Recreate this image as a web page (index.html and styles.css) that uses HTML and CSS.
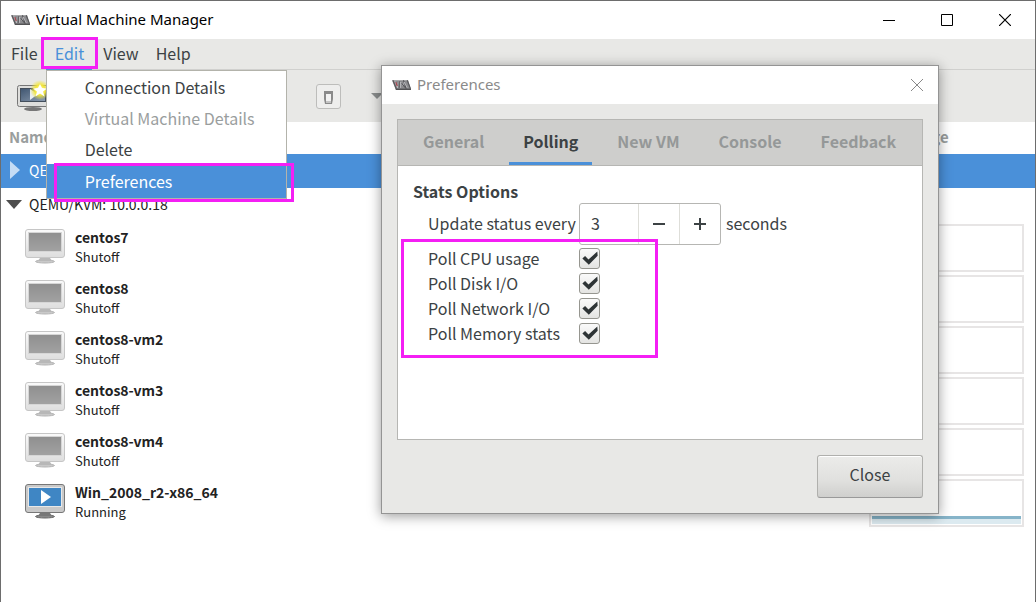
FILE: index.html
```html
<!DOCTYPE html>
<html lang="en">
<head>
<meta charset="utf-8">
<title>Virtual Machine Manager</title>
<link rel="stylesheet" href="styles.css">
</head>
<body>
<svg class="defs" width="0" height="0" aria-hidden="true">
  <defs>
    <linearGradient id="g-case" x1="0" y1="0" x2="0" y2="1"><stop offset="0" stop-color="#fafafa"/><stop offset="1" stop-color="#dedede"/></linearGradient>
    <linearGradient id="g-off" x1="0" y1="0" x2="0" y2="1"><stop offset="0" stop-color="#8f8f8f"/><stop offset="1" stop-color="#a2a2a2"/></linearGradient>
    <linearGradient id="g-dark" x1="0" y1="0" x2="1" y2="1"><stop offset="0" stop-color="#3f5570"/><stop offset="1" stop-color="#8c9cb0"/></linearGradient>
    <radialGradient id="g-glow"><stop offset="0" stop-color="#fffbd0"/><stop offset=".5" stop-color="#f3e63c"/><stop offset="1" stop-color="#f3e63c" stop-opacity="0"/></radialGradient>
    <symbol id="logo" viewBox="0 0 20 12">
      <path d="M0 1h17l3 10H4z" fill="#8b8b8e"/>
      <path d="M1 1l3.500 9M12 1l3 9M16 1l3.500 9" stroke="#58585c" stroke-width="1.200" fill="none"/>
      <path d="M3 2l3 7 1-7M9 9V3l3 4 1-4 3 6" stroke="#c6c6ca" stroke-width=".8" fill="none"/>
      <path d="M7.500 2v7M10 4l4 5" stroke="#4a4a4e" stroke-width="1" fill="none"/>
      <path d="M4 3l1.500 4" stroke="#a8404a" stroke-width="1.200"/>
      <path d="M4 10.500h16" stroke="#4c4c4e" stroke-width="1.400"/>
    </symbol>
    <symbol id="vm-off" viewBox="0 0 40 36">
      <ellipse cx="20" cy="32.500" rx="9.500" ry="1.500" fill="#c9c9c9" stroke="#b4b4b4"/>
      <path d="M15 29h10l2 3H13z" fill="#b8b8b8"/>
      <rect x=".5" y=".5" width="39" height="28" rx="2.500" fill="url(#g-case)" stroke="#c6c6c6"/>
      <rect x="3.500" y="3.500" width="33" height="19" fill="url(#g-off)" stroke="#d6d6d6"/>
    </symbol>
    <symbol id="vm-on" viewBox="0 0 40 36">
      <ellipse cx="20" cy="32.500" rx="9.500" ry="1.500" fill="#888" stroke="#666"/>
      <path d="M15 29h10l2 3H13z" fill="#777"/>
      <rect x=".5" y=".5" width="39" height="28" rx="2.500" fill="#c9c9c9" stroke="#777"/>
      <rect x="3.500" y="3.500" width="33" height="19" fill="#3f86c4" stroke="#e8e8e8"/>
      <path d="M16 6l10 7-10 7z" fill="#fff"/>
    </symbol>
  </defs>
</svg>

<div class="window">
  <header class="titlebar">
    <svg class="logo"><use href="#logo"/></svg>
    <h1 class="title">Virtual Machine Manager</h1>
    <div class="controls">
      <button class="control" aria-label="Minimize"><svg width="12" height="12"><path d="M0 6.500h12" stroke="#000"/></svg></button>
      <button class="control" aria-label="Maximize"><svg width="12" height="12"><path d="M.5.5h11v11H.5z" stroke="#000" fill="none"/></svg></button>
      <button class="control" aria-label="Close window"><svg width="12" height="12"><path d="M0 0l12 12M12 0L0 12" stroke="#000" stroke-width="1.200"/></svg></button>
    </div>
  </header>

  <nav class="menubar">
    <button class="menu">File</button>
    <div class="menu-slot">
      <button class="menu menu-open" aria-expanded="true">Edit</button>
      <span class="mark mark-edit"></span>
      <div class="dropdown" role="menu">
        <button class="item" role="menuitem">Connection Details</button>
        <button class="item" role="menuitem" disabled>Virtual Machine Details</button>
        <button class="item" role="menuitem">Delete</button>
        <button class="item item-active" role="menuitem">Preferences</button>
        <span class="mark mark-preferences"></span>
      </div>
    </div>
    <button class="menu">View</button>
    <button class="menu">Help</button>
  </nav>

  <div class="toolbar">
    <button class="tool tool-new" aria-label="New virtual machine">
      <svg width="36" height="32" viewBox="0 0 36 32">
        <ellipse cx="17" cy="29" rx="9" ry="2" fill="#777"/>
        <rect x="1.500" y="5.500" width="31" height="21" rx="2" fill="#dededc" stroke="#777"/>
        <rect x="4.500" y="8.500" width="25" height="13" fill="url(#g-dark)" stroke="#444f5c"/>
        <path d="M14 9l8 5-8 6z" fill="#e8edf2"/>
        <circle cx="24" cy="10" r="10" fill="url(#g-glow)"/>
        <path d="M24 4l2 4 5 .5-4 3 1.500 5-4.500-3-4.500 3 1.500-5-4-3 5-.5z" fill="#fff"/>
      </svg>
    </button>
    <button class="tool tool-power" aria-label="Shut down">
      <svg width="25" height="25" viewBox="0 0 25 25">
        <rect x=".5" y=".5" width="24" height="24" rx="2.500" fill="#eeeeed" stroke="#bdbdbb"/>
        <path d="M8 7h9v8l-1 5H9l-1-5z" fill="#8a8a8a"/>
        <path d="M10 10h5v7h-5z" fill="#f2f2f2"/>
        <path d="M10 17h5v2h-5z" fill="#c4c4c4"/>
      </svg>
    </button>
    <button class="tool" aria-label="Shut down options"><svg width="12" height="7"><path d="M0 0h12L6 6z" fill="#8a8d8d"/></svg></button>
  </div>

  <table class="machines">
    <thead><tr><th>Name</th><th class="usage">CPU usage</th></tr></thead>
    <tbody>
      <tr class="host host-selected"><td colspan="2"><div class="host-name"><svg class="arrow" viewBox="0 0 16 18"><path d="M4 0l10 9-10 9z" fill="#c5dcf5"/></svg>QEMU/KVM</div></td></tr>
      <tr class="host"><td colspan="2"><div class="host-name"><svg class="arrow" viewBox="0 0 16 18"><path d="M0 5h16l-8 9z" fill="#4d4d4d"/></svg>QEMU/KVM: 10.0.0.18</div></td></tr>
      <tr class="vm"><td><div class="vm-cell"><svg class="vm-icon"><use href="#vm-off"/></svg><div><b>centos7</b><p>Shutoff</p></div></div></td><td><div class="chart"></div></td></tr>
      <tr class="vm"><td><div class="vm-cell"><svg class="vm-icon"><use href="#vm-off"/></svg><div><b>centos8</b><p>Shutoff</p></div></div></td><td><div class="chart"></div></td></tr>
      <tr class="vm"><td><div class="vm-cell"><svg class="vm-icon"><use href="#vm-off"/></svg><div><b>centos8-vm2</b><p>Shutoff</p></div></div></td><td><div class="chart"></div></td></tr>
      <tr class="vm"><td><div class="vm-cell"><svg class="vm-icon"><use href="#vm-off"/></svg><div><b>centos8-vm3</b><p>Shutoff</p></div></div></td><td><div class="chart"></div></td></tr>
      <tr class="vm"><td><div class="vm-cell"><svg class="vm-icon"><use href="#vm-off"/></svg><div><b>centos8-vm4</b><p>Shutoff</p></div></div></td><td><div class="chart"></div></td></tr>
      <tr class="vm"><td><div class="vm-cell"><svg class="vm-icon"><use href="#vm-on"/></svg><div><b>Win_2008_r2-x86_64</b><p>Running</p></div></div></td><td><div class="chart chart-live"></div></td></tr>
    </tbody>
  </table>

  <section class="dialog" role="dialog" aria-labelledby="dialog-title">
    <header class="dialog-bar">
      <svg class="logo"><use href="#logo"/></svg>
      <h2 class="title" id="dialog-title">Preferences</h2>
      <button class="control" aria-label="Close preferences"><svg width="12" height="12"><path d="M0 0l12 12M12 0L0 12" stroke="#888"/></svg></button>
    </header>
    <div class="dialog-body">
      <div class="notebook">
        <div class="tabs" role="tablist">
          <button class="tab" role="tab">General</button>
          <button class="tab tab-active" role="tab" aria-selected="true">Polling</button>
          <button class="tab" role="tab">New VM</button>
          <button class="tab" role="tab">Console</button>
          <button class="tab" role="tab">Feedback</button>
        </div>
        <div class="page">
          <h3 class="group">Stats Options</h3>
          <div class="interval">
            <label class="option-label" for="interval">Update status every</label>
            <div class="spin">
              <input id="interval" type="text" value="3">
              <button aria-label="Decrease"><svg width="14" height="14"><path d="M1 7h12" stroke="#3c4244" stroke-width="2"/></svg></button>
              <button aria-label="Increase"><svg width="14" height="14"><path d="M1 7h12M7 1v12" stroke="#3c4244" stroke-width="2"/></svg></button>
            </div>
            <span class="unit">seconds</span>
          </div>
          <div class="polls">
            <div class="poll"><label class="option-label" for="cpu">Poll CPU usage</label><input id="cpu" type="checkbox" checked></div>
            <div class="poll"><label class="option-label" for="disk">Poll Disk I/O</label><input id="disk" type="checkbox" checked></div>
            <div class="poll"><label class="option-label" for="net">Poll Network I/O</label><input id="net" type="checkbox" checked></div>
            <div class="poll"><label class="option-label" for="mem">Poll Memory stats</label><input id="mem" type="checkbox" checked></div>
            <span class="mark mark-polls"></span>
          </div>
        </div>
      </div>
      <button class="close">Close</button>
    </div>
  </section>
</div>
</body>
</html>
```

FILE: styles.css
```css
* { box-sizing: border-box; }
body { margin: 0; font: 16px/20px "Noto Sans CJK SC", "Noto Sans", sans-serif; color: #3c4244; background: #fff; }
button, input { font: inherit; color: inherit; margin: 0; padding: 0; border: 0; background: none; }
svg { display: block; }
h1, h2, h3, p { margin: 0; }
.defs { position: absolute; }

.window { position: relative; min-height: 100vh; border: 1px solid #6d6d6d; border-bottom: 0; overflow: hidden; }
.titlebar { display: flex; align-items: center; height: 38px; padding-left: 10px; }
.logo { width: 19px; height: 12px; flex: none; }
.title { flex: 1; padding: 0 0 2px 6px; font: 15px/20px "Noto Sans", sans-serif; color: #000; }
.controls { display: flex; padding-right: 1px; }
.control { display: grid; place-items: center; width: 58px; height: 38px; }

.menubar { display: flex; height: 31px; padding-left: 1px; background: #e8e8e6; border-bottom: 1px solid #d0d0ce; }
.menu { height: 30px; padding: 0 8px 2px 9px; }
.menu-slot { position: relative; }
.menu-slot + .menu { margin-left: 2px; }
.menu-open { height: 31px; padding-bottom: 1px; color: #4a90d9; border-bottom: 2px solid #4a90d9; }
.mark { position: absolute; border: 3px solid #f41ff4; pointer-events: none; }
.mark-edit { top: -2px; left: -5px; width: 57px; height: 32px; }
.dropdown { position: absolute; z-index: 1; top: 31px; left: 0; width: 241px; border: 1px solid #b3b3ab; background: #fff; }
.item { display: block; width: 100%; height: 31px; padding: 0 38px; text-align: left; white-space: nowrap; }
.item:disabled { color: #9a9e9e; }
.item-active { height: 34px; color: #fff; background: #4a90d9; }
.mark-preferences { inset: auto -8px -4px 7px; height: 39px; }

.toolbar { display: flex; align-items: center; height: 52px; padding-left: 15px; background: #e8e8e6; }
.tool-power { margin: 0 30px 0 264px; }

.machines { width: 100%; border-collapse: collapse; table-layout: fixed; font-size: 14px; line-height: 19px; color: #222; }
.machines td, .machines th { padding: 0; }
.machines th { height: 32px; padding: 0 0 4px 8px; font-size: 15px; text-align: left; color: #9a9e9e; }
.machines .usage { width: 166px; padding-left: 2px; }
.host { height: 34px; }
.host-name { display: flex; align-items: center; gap: 7px; padding: 0 0 2px 5px; }
.host-selected { color: #fff; background: #4a90d9; }
.arrow { width: 16px; height: 18px; }
.vm { height: 51px; }
.vm-cell { display: flex; align-items: center; gap: 10px; padding: 0 0 2px 24px; }
.vm-icon { width: 40px; height: 36px; }
.vm b { display: block; }
.vm p { font-size: 13px; }
.chart { height: 48px; margin-right: 11px; padding: 1px; border: 2px solid #e7e5e5; }
.chart-live { display: flex; align-items: end; }
.chart-live::after { content: ""; flex: 1; height: 5px; border-top: 3px solid #86b4c9; background: #dceaf0; }

.dialog { position: absolute; z-index: 2; top: 64px; left: 380px; width: 558px; border: 1px solid #949494; background: #e8e8e6; box-shadow: 0 2px 12px rgba(0, 0, 0, .4); }
.dialog-bar { display: flex; align-items: center; height: 38px; padding-left: 10px; background: #fff; }
.dialog-bar .title { color: #8a8a8a; }
.dialog-bar .control { width: 42px; }
.dialog-body { display: flex; flex-direction: column; padding: 15px; }
.notebook { border: 1px solid #b6b6b3; background: #fff; }
.tabs { display: flex; gap: 11px; height: 46px; padding-left: 11px; background: #cececc; border-bottom: 1px solid #b6b6b3; }
.tab { padding: 0 14px; font-weight: bold; color: #959898; border-bottom: 3px solid transparent; }
.tab-active { color: #3c4244; border-color: #4a90d9; }
.page { min-height: 273px; padding: 15px; }
.group { padding-bottom: 2px; font-size: 16px; line-height: 20px; }
.interval, .poll { display: flex; align-items: center; }
.option-label, .unit { padding-bottom: 2px; }
.option-label { width: 151px; white-space: nowrap; }
.interval { height: 42px; padding-left: 15px; }
.spin { display: flex; width: 142px; height: 42px; margin-right: 5px; border: 1px solid #b6b6b3; border-radius: 3px; }
.spin input { flex: 1; min-width: 0; padding: 0 0 2px 11px; }
.spin button { display: grid; place-items: center; width: 41px; border-left: 1px solid #deded9; }
.polls { position: relative; padding: 1px 0 0 15px; }
.poll { height: 25px; }
.mark-polls { top: -6px; left: -12px; width: 257px; height: 119px; }
.poll input { appearance: none; width: 21px; height: 21px; border: 1px solid #969690; border-radius: 3px; background: linear-gradient(#fafafa, #e4e4e2); display: grid; place-items: center; }
.poll input::before { content: ""; width: 17px; height: 15px; background: #2e3436; clip-path: polygon(8% 50%, 24% 34%, 44% 56%, 96% 4%, 98% 32%, 46% 92%); }
.close { align-self: flex-end; width: 106px; height: 43px; margin-top: 15px; padding-bottom: 5px; border: 1px solid #b0b0ad; border-bottom-color: #999; border-radius: 3px; background: linear-gradient(#ececea, #e0e0de 60%, #cfcfcd); box-shadow: inset 0 1px #fff; }
```
